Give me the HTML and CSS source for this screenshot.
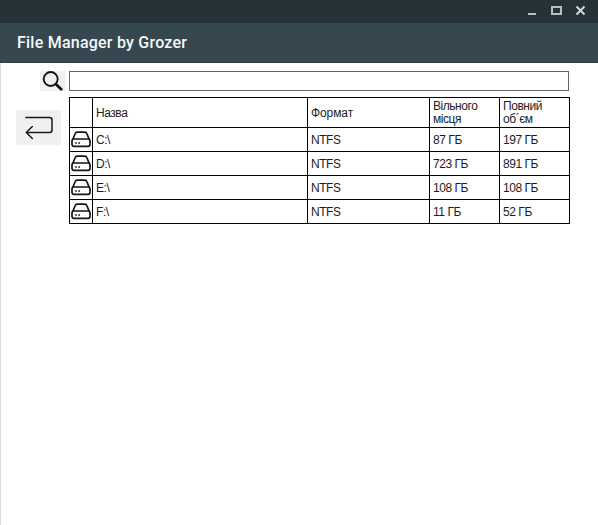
FILE: index.html
```
<!DOCTYPE html>
<html lang="uk">
<head>
<meta charset="utf-8">
<title>File Manager by Grozer</title>
<link rel="stylesheet" href="styles.css">
</head>
<body>
<svg class="defs" width="0" height="0" aria-hidden="true">
  <symbol id="drive" viewBox="0 0 20 18">
    <path d="M1.7 8.6 4 3Q4.7 1.2 6.4 1.2H13.6Q15.3 1.2 16 3L18.3 8.6" />
    <rect x="1" y="8" width="18" height="7.4" rx="1.8" />
    <path d="M4.2 12H5.8M7.4 12H9" />
  </symbol>
</svg>
<div class="window">
  <header class="titlebar">
    <svg class="controls" width="62" height="23" viewBox="0 0 62 23">
      <path d="M2 14H10" stroke="#b4bfc4" stroke-width="2" />
      <rect x="26" y="7" width="9" height="7" fill="none" stroke="#b4bfc4" stroke-width="2" />
      <path d="M50.5 6.5 58.5 14.5M58.5 6.5 50.5 14.5" stroke="#d2dce0" stroke-width="1.9" />
    </svg>
  </header>
  <div class="appbar">File Manager by Grozer</div>
  <main class="content">
    <aside class="side">
      <button class="search-btn" aria-label="Пошук">
        <svg width="26" height="20" viewBox="0 0 26 20"><circle cx="10.7" cy="8" r="7" fill="none" stroke="#111" stroke-width="1.8" /><path d="M16 13.2 21.2 18.2" stroke="#111" stroke-width="2.8" stroke-linecap="round" /></svg>
      </button>
      <button class="back-btn" aria-label="Назад">
        <svg width="45" height="35" viewBox="0 0 45 35" fill="none" stroke="#181818" stroke-width="1.5" stroke-linecap="round" stroke-linejoin="round"><path d="M10 7.5H33.5Q36 7.5 36 10V20Q36 22.5 33.5 22.5H10.5M16.3 16.5 10.3 22.5 16.3 28.5" /></svg>
      </button>
    </aside>
    <section class="main">
      <input class="search" type="text">
      <div class="table">
        <div class="cell"></div><div class="cell">Назва</div><div class="cell wide">Формат</div><div class="cell wrap">Вільного місця</div><div class="cell wrap">Повний об´єм</div>
        <div class="icon"><svg width="20" height="18"><use href="#drive" /></svg></div><div class="cell">C:\</div><div class="cell">NTFS</div><div class="cell">87 ГБ</div><div class="cell">197 ГБ</div>
        <div class="icon"><svg width="20" height="18"><use href="#drive" /></svg></div><div class="cell">D:\</div><div class="cell">NTFS</div><div class="cell">723 ГБ</div><div class="cell">891 ГБ</div>
        <div class="icon"><svg width="20" height="18"><use href="#drive" /></svg></div><div class="cell">E:\</div><div class="cell">NTFS</div><div class="cell">108 ГБ</div><div class="cell">108 ГБ</div>
        <div class="icon"><svg width="20" height="18"><use href="#drive" /></svg></div><div class="cell">F:\</div><div class="cell">NTFS</div><div class="cell">11 ГБ</div><div class="cell">52 ГБ</div>
      </div>
    </section>
  </main>
</div>
</body>
</html>
```
FILE: styles.css
```
* { box-sizing: border-box; }
body { margin: 0; background: #fff; }
.defs { display: block; }
.window { height: 525px; display: flex; flex-direction: column; overflow: hidden; }
.titlebar { height: 23px; background: #273238; display: flex; justify-content: flex-end; padding-right: 10px; }
.controls { display: block; }
.appbar {
  height: 40px;
  background: #37474f;
  border-bottom: 1px solid #304048;
  color: #f5f9fa;
  font: 500 16px/39px Roboto, sans-serif;
  letter-spacing: 0.23px;
  padding-left: 17px;
}
.content { flex: 1; display: flex; border-left: 1px solid #dcdcdc; padding: 8px 0 0 15px; }
.side { width: 53px; display: flex; flex-direction: column; }
button { border: 0; padding: 0; background: #f0f0f0; }
button svg { display: block; }
.search-btn { width: 26px; height: 20px; margin-left: 24px; }
.back-btn { width: 45px; height: 35px; margin-top: 19px; }
.main { width: 501px; }
.search { display: block; width: 500px; height: 20px; border: 1px solid #646464; background: #fff; padding: 0 3px; outline: 0; font: 11px "Liberation Sans", sans-serif; }
.table {
  display: grid;
  grid-template-columns: 22px 214px 121px 69px 69px;
  grid-template-rows: 29px repeat(4, 23px);
  gap: 1px;
  padding: 1px;
  margin-top: 6px;
  background: #000;
  font: 12px/13px "Liberation Sans", sans-serif;
  letter-spacing: -0.45px;
  color: #1c1c24;
}
.cell, .icon { background: #fff; display: flex; align-items: center; }
.cell { padding: 1px 3px 0; white-space: nowrap; }
.wide { letter-spacing: -0.1px; }
.wrap { white-space: normal; padding-right: 15px; }
.icon { justify-content: center; fill: none; stroke: #15151a; stroke-width: 1.7; }
```
